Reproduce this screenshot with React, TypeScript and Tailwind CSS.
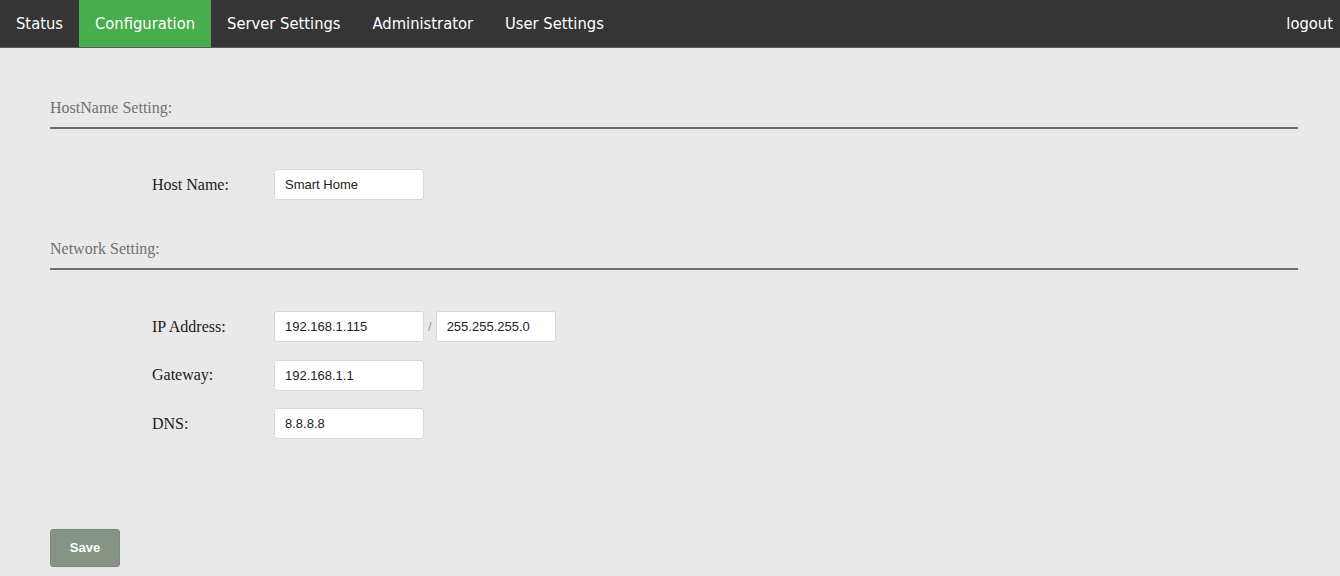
import { useState } from 'react';

const tabs = ['Status', 'Configuration', 'Server Settings', 'Administrator', 'User Settings'];

function Field({ value, width = 'w-[150px]' }: { value: string; width?: string }) {
  const [v, setV] = useState(value);
  return (
    <input
      value={v}
      onChange={(e) => setV(e.target.value)}
      className={`${width} h-[31px] rounded-[3px] border border-[#d6d6d6] bg-white pl-[10px] text-[13px] text-[#222] outline-none`}
      style={{ fontFamily: "'Liberation Sans', Arial, sans-serif" }}
    />
  );
}

function Row({ label, children }: { label: string; children: React.ReactNode }) {
  return (
    <div className="flex items-center">
      <div className="w-[122px] text-[16px] text-[#1a1a1a]">{label}</div>
      {children}
    </div>
  );
}

function Section({ title }: { title: string }) {
  return (
    <div className="border-b-2 border-[#6e6e6e] pb-[9px] text-[16px] leading-[20px] text-[#707070]">{title}</div>
  );
}

export default function App() {
  const [active] = useState('Configuration');
  return (
    <div className="min-h-[576px] bg-[#e9e9e9]" style={{ fontFamily: "'Liberation Serif', 'Times New Roman', serif" }}>
      <div
        className="flex h-[48px] items-stretch justify-between bg-[#353535] border-b border-[#5a5a5a]"
        style={{ fontFamily: "'DejaVu Sans Condensed', 'DejaVu Sans', Tahoma, sans-serif" }}
      >
        <div className="flex">
          {tabs.map((t) => (
            <div
              key={t}
              className={`flex items-center px-4 pt-[2px] text-[16.4px] text-white ${t === active ? 'bg-[#48ad4c]' : ''}`}
            >
              {t}
            </div>
          ))}
        </div>
        <div className="flex items-center px-[7px] pt-[2px] text-[16.4px] text-white">logout</div>
      </div>

      <div className="pl-[50px] pr-[42px] pt-[50px]">
        <Section title="HostName Setting:" />
        <div className="pl-[102px] pt-[40px]">
          <Row label="Host Name:">
            <Field value="Smart Home" />
          </Row>
        </div>

        <div className="pt-[39px]">
          <Section title="Network Setting:" />
        </div>
        <div className="flex flex-col gap-[17.5px] pl-[102px] pt-[41px]">
          <Row label="IP Address:">
            <Field value="192.168.1.115" />
            <span className="mx-[4px] text-[13px] text-[#999]" style={{ fontFamily: "'Liberation Sans', Arial, sans-serif" }}>/</span>
            <Field value="255.255.255.0" width="w-[120px]" />
          </Row>
          <Row label="Gateway:">
            <Field value="192.168.1.1" />
          </Row>
          <Row label="DNS:">
            <Field value="8.8.8.8" />
          </Row>
        </div>

        <div className="pt-[90px]">
          <button
            className="h-[38px] w-[70px] rounded-[3px] border border-[#7c8a7b] bg-[#869485] text-[13px] font-bold text-white"
            style={{ fontFamily: "'Liberation Sans', Arial, sans-serif" }}
          >
            Save
          </button>
        </div>
      </div>
    </div>
  );
}
